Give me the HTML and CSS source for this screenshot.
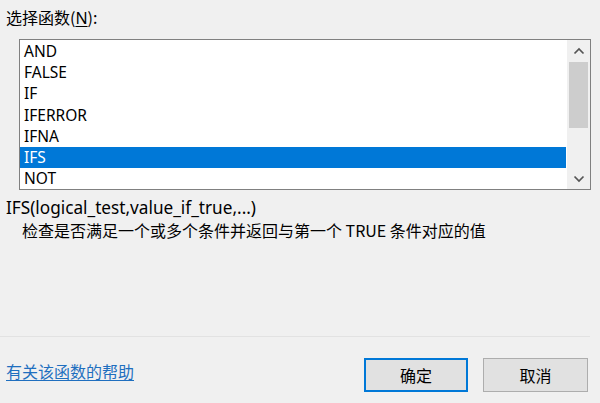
FILE: index.html
```html
<!DOCTYPE html>
<html lang="zh-CN">
<head>
<meta charset="utf-8">
<title>选择函数</title>
<link rel="stylesheet" href="styles.css">
</head>
<body>
<div class="dialog">
  <div class="label">选择函数(<u>N</u>):</div>
  <div class="listbox">
    <ul class="items">
      <li>AND</li>
      <li>FALSE</li>
      <li>IF</li>
      <li>IFERROR</li>
      <li>IFNA</li>
      <li class="selected">IFS</li>
      <li>NOT</li>
    </ul>
    <div class="scrollbar">
      <div class="arrow">
        <svg width="12" height="8" viewBox="0 0 12 8"><path d="M1.5 6.5 L6 2 L10.5 6.5" fill="none" stroke="#555" stroke-width="1.7"/></svg>
      </div>
      <div class="track"><div class="thumb"></div></div>
      <div class="arrow">
        <svg width="12" height="8" viewBox="0 0 12 8"><path d="M1.5 1.5 L6 6 L10.5 1.5" fill="none" stroke="#555" stroke-width="1.7"/></svg>
      </div>
    </div>
  </div>
  <div class="signature">IFS(logical_test,value_if_true,...)</div>
  <div class="description">检查是否满足一个或多个条件并返回与第一个 TRUE 条件对应的值</div>
  <div class="separator"></div>
  <div class="footer">
    <a class="help" href="#">有关该函数的帮助</a>
    <div class="buttons">
      <button class="btn default">确定</button>
      <button class="btn">取消</button>
    </div>
  </div>
</div>
</body>
</html>
```
FILE: styles.css
```css
* { box-sizing: border-box; }
html, body {
  margin: 0;
  padding: 0;
  background: #f0f0f0;
}
body {
  width: 600px;
  height: 403px;
  overflow: hidden;
  font-family: "Noto Sans", "Noto Sans CJK SC", sans-serif;
  font-size: 16px;
  color: #000;
}
.dialog {
  display: flex;
  flex-direction: column;
  height: 403px;
}
.label {
  margin: 7px 0 0 6px;
  line-height: 20px;
  height: 20px;
  font-family: "Noto Sans CJK SC", sans-serif;
  font-size: 16px;
}
.label u {
  font-family: "Noto Sans", sans-serif;
  text-decoration-thickness: 1px;
  text-underline-offset: 2px;
}
.listbox {
  margin: 12px 9px 0 19px;
  height: 151px;
  border: 1px solid #808080;
  background: #ffffff;
  display: flex;
}
.items {
  list-style: none;
  margin: 1px 0 0 0;
  padding: 0;
  flex: 1;
}
.items li {
  height: 21.2px;
  line-height: 21px;
  padding-left: 4px;
  font-size: 15.5px;
  color: #000;
  white-space: nowrap;
}
.items li.selected {
  background: #0078d7;
  color: #ffffff;
  margin-right: 1px;
}
.scrollbar {
  width: 23px;
  background: #f0f0f0;
  display: flex;
  flex-direction: column;
}
.arrow {
  height: 21px;
  display: flex;
  align-items: center;
  justify-content: center;
}
.track {
  flex: 1;
  padding: 1px 2px;
}
.thumb {
  height: 66px;
  background: #cdcdcd;
}
.signature {
  margin: 8px 0 0 6px;
  line-height: 20px;
  font-size: 17.2px;
  color: #000;
}
.description {
  margin: 2px 0 0 22px;
  line-height: 20px;
  font-family: "Noto Sans CJK SC", sans-serif;
  font-size: 16px;
  color: #000;
}
.separator {
  margin: 96px 10px 0 0;
  height: 1px;
  background: #e2e2e2;
}
.footer {
  display: flex;
  justify-content: space-between;
  align-items: flex-start;
  padding: 21px 12px 0 6px;
}
.help {
  margin-top: 3px;
  line-height: 20px;
  font-family: "Noto Sans CJK SC", sans-serif;
  font-size: 16px;
  color: #1f6fbf;
  text-decoration: underline;
  text-decoration-thickness: 1px;
  text-underline-offset: 2px;
}
.buttons {
  display: flex;
  gap: 15px;
}
.btn {
  width: 105px;
  height: 34px;
  background: #e1e1e1;
  border: 1px solid #adadad;
  font-family: "Noto Sans CJK SC", sans-serif;
  font-size: 16px;
  color: #000;
  padding: 0;
}
.btn.default {
  width: 104px;
  border: 2px solid #0078d7;
}
```
